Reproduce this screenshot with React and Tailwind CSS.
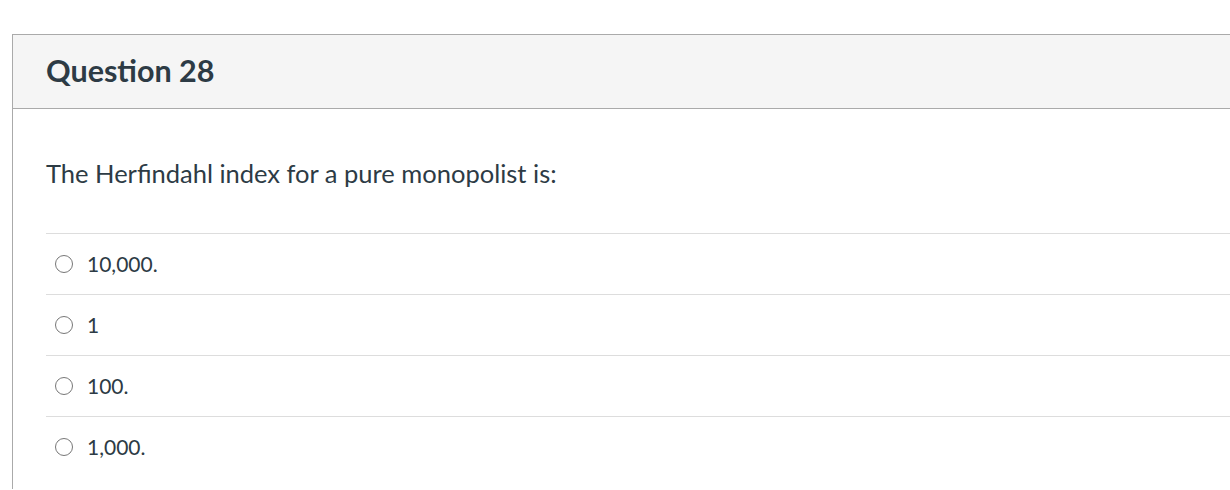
import React from "react";

const options = ["10,000.", "1", "100.", "1,000."];

const App = () => {
  return (
    <div className="h-[490px] bg-white pt-[34px] pl-3 overflow-hidden" style={{ fontFamily: "Lato, 'Open Sans', sans-serif" }}>
      <div className="w-[1260px] border-l border-t border-[#aaaaaa] text-[#2d3b45] pb-[12px]">
        <div className="h-[74px] bg-[#f5f5f5] border-b border-[#aaaaaa] flex items-center pl-[33px]">
          <h2 className="text-[30.5px] font-bold leading-none -mt-[2px]">Question 28</h2>
        </div>
        <div className="pl-[33px]">
          <p className="text-[25.5px] pt-[49px] pb-[45px] leading-[30px]">The Herfindahl index for a pure monopolist is:</p>
          <div>
            {options.map((opt) => (
              <div key={opt} className="border-t border-[#dddddd] h-[61px] flex items-center pl-[9px]">
                <span className="w-[18px] h-[18px] rounded-full border-[1.5px] border-[#777777] shrink-0" />
                <span className="ml-[14px] text-[21px]">{opt}</span>
              </div>
            ))}
          </div>
        </div>
      </div>
    </div>
  );
};

export default App;
